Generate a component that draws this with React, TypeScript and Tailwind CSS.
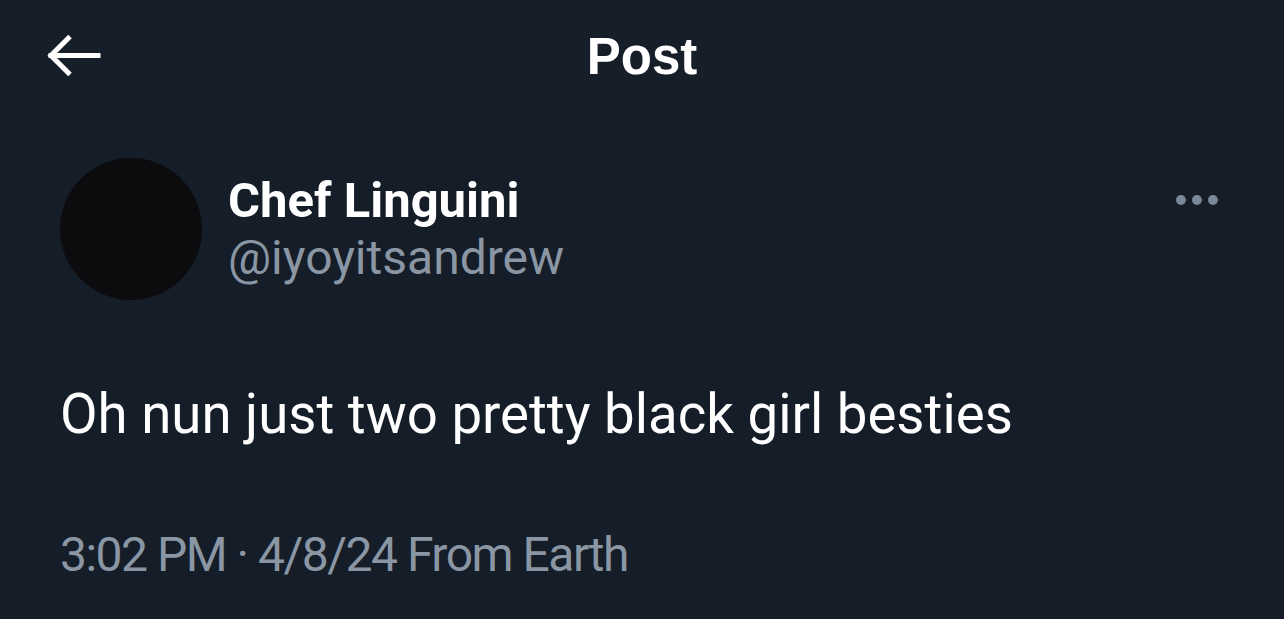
import React from "react";

export default function App() {
  return (
    <div className="w-[1284px] h-[619px] overflow-hidden bg-[#151d28] text-white" style={{ fontFamily: 'Roboto, "Liberation Sans", sans-serif' }}>
      <div className="h-[112px] bg-[#161e2a] relative flex items-center justify-center">
        <svg className="absolute left-[46px] top-[33px]" width="56" height="46" viewBox="0 0 56 46" fill="none" stroke="white" strokeWidth="5" strokeLinecap="square">
          <path d="M52 22.5H5" />
          <path d="M24 3.5L5 22.5L24 41.5" strokeLinecap="butt" />
        </svg>
        <div className="text-[51px] font-bold leading-none mt-[0px]" style={{ fontFamily: '"Liberation Sans", sans-serif' }}>Post</div>
      </div>
      <div className="flex pl-[60px] pr-[66px] pt-[46px]">
        <div className="w-[142px] h-[142px] rounded-full bg-[#0c0c0e] shrink-0" />
        <div className="ml-[26px] flex flex-col pt-[16px]">
          <div className="text-[49px] font-bold leading-[54px] text-white">Chef Linguini</div>
          <div className="text-[48px] leading-[60px] text-[#8a96a3]">@iyoyitsandrew</div>
        </div>
        <div className="ml-auto flex gap-[6px] pt-[37px] h-fit">
          <span className="w-[10px] h-[10px] rounded-full bg-[#7a8897]" />
          <span className="w-[10px] h-[10px] rounded-full bg-[#7a8897]" />
          <span className="w-[10px] h-[10px] rounded-full bg-[#7a8897]" />
        </div>
      </div>
      <div className="pl-[60px] mt-[84px] text-[54.6px] leading-[60px] text-white">Oh nun just two pretty black girl besties</div>
      <div className="pl-[60px] mt-[83px] text-[48px] leading-[56px] text-[#8a96a3] tracking-[-1.5px]">3:02 PM · 4/8/24 From Earth</div>
    </div>
  );
}
